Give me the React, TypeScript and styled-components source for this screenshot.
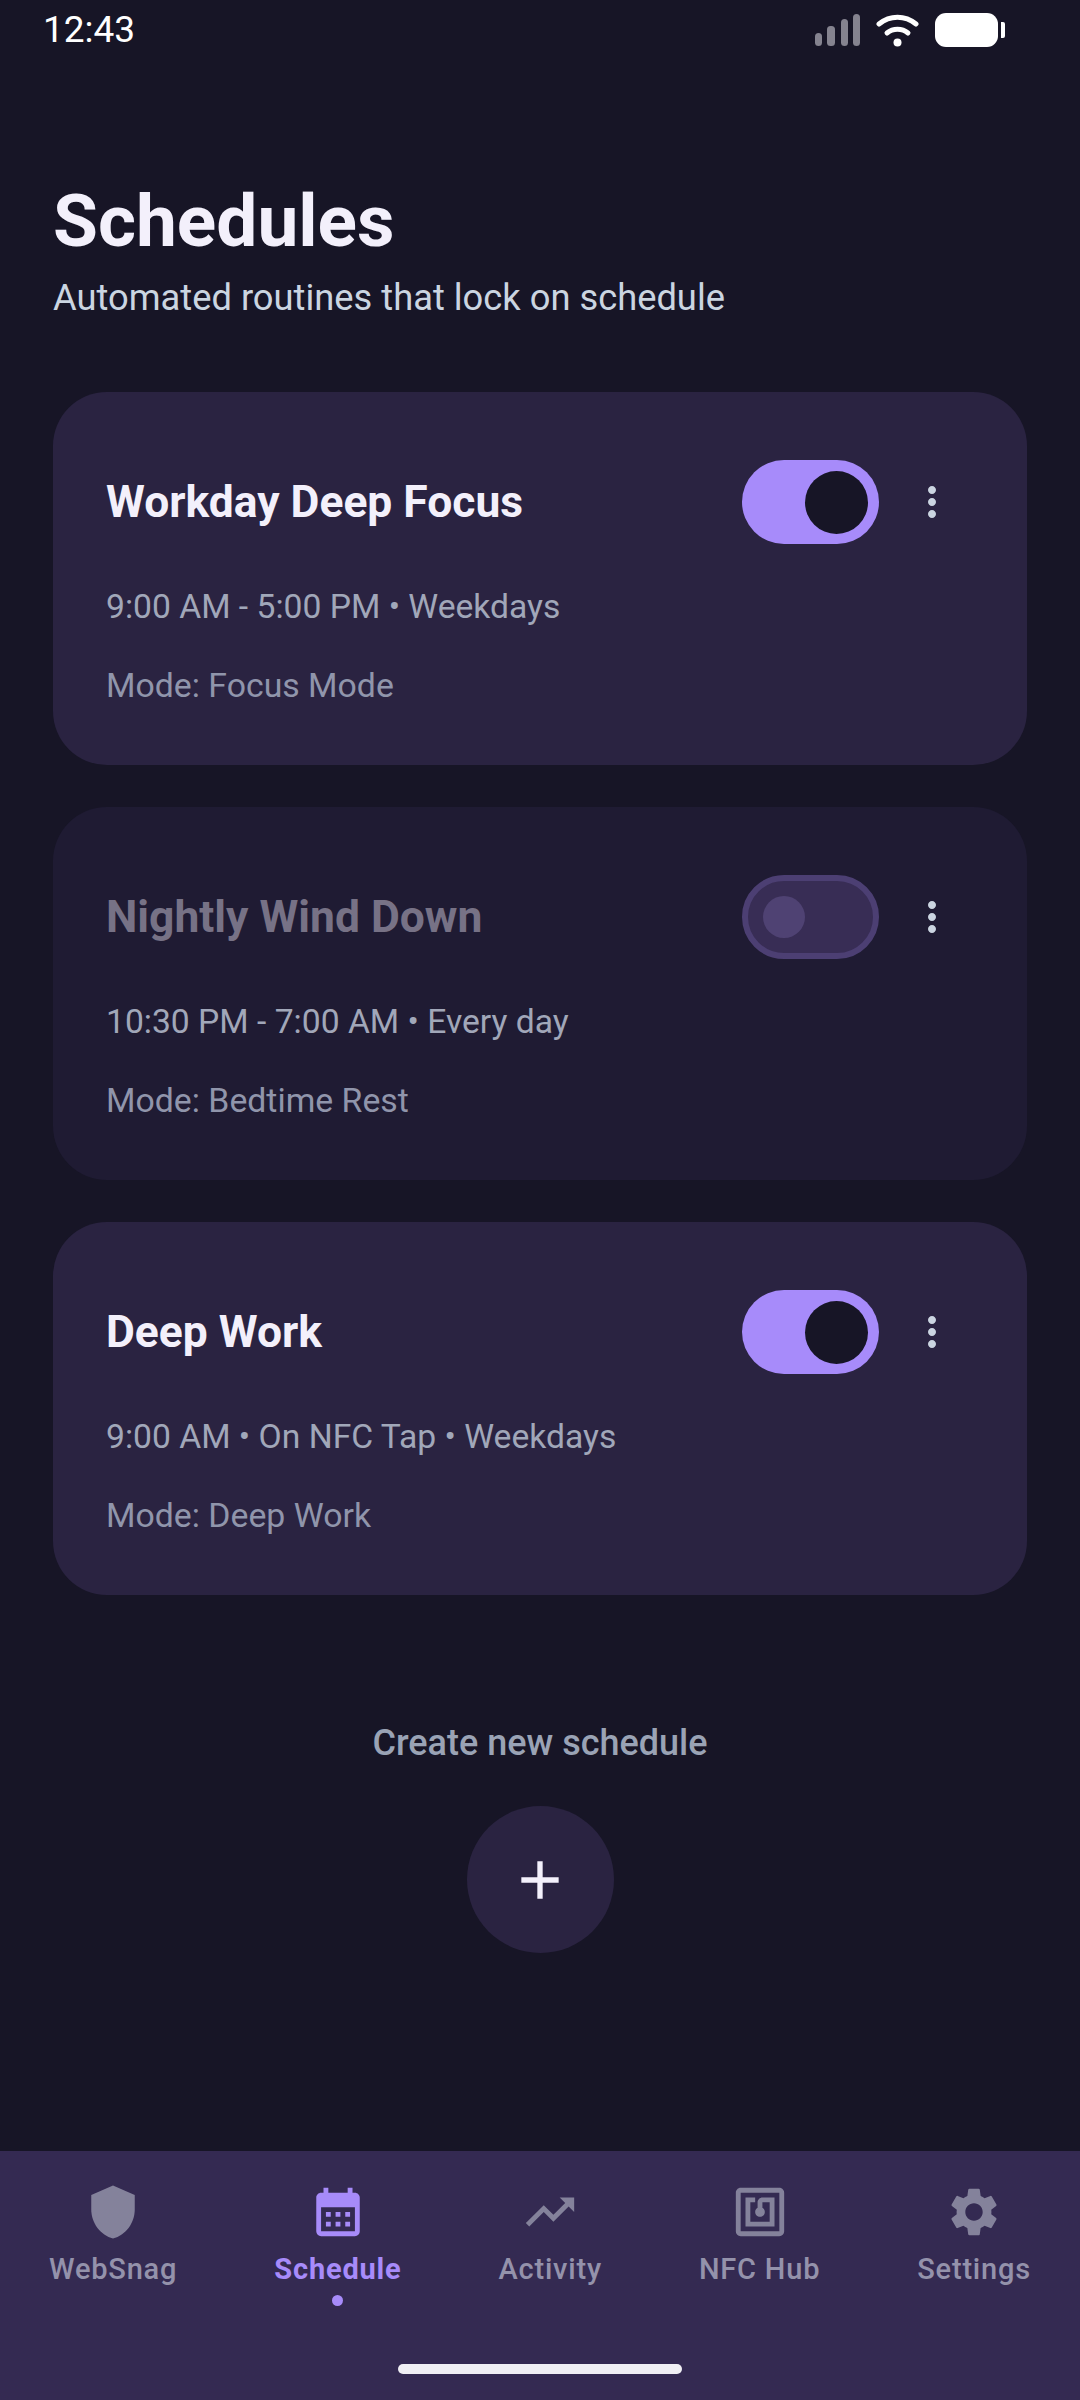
import styled, { createGlobalStyle } from 'styled-components';
import {
  MdAdd,
  MdCalendarMonth,
  MdMoreVert,
  MdNfc,
  MdSettings,
  MdShield,
  MdTrendingUp,
} from 'react-icons/md';

const GlobalStyle = createGlobalStyle`
  html, body {
    margin: 0;
    padding: 0;
    background: #171526;
  }
  * {
    box-sizing: border-box;
  }
`;

const Screen = styled.div`
  width: 1080px;
  height: 2400px;
  display: flex;
  flex-direction: column;
  background: #171526;
  font-family: Roboto, 'Liberation Sans', sans-serif;
  overflow: hidden;
`;

const StatusBar = styled.div`
  height: 60px;
  flex: none;
  display: flex;
  align-items: center;
  justify-content: space-between;
  padding: 0 75px 0 43px;
`;

const Clock = styled.span`
  font-size: 37px;
  line-height: 60px;
  color: #ffffff;
`;

const Main = styled.main`
  flex: 1;
  padding: 119px 53px 0;
  display: flex;
  flex-direction: column;
`;

const Title = styled.h1`
  margin: 0;
  font-size: 73px;
  line-height: 84px;
  font-weight: 700;
  color: #f3f0fb;
`;

const Subtitle = styled.p`
  margin: 14px 0 0;
  font-size: 36.3px;
  line-height: 42px;
  color: #cbd5e1;
`;

const CardList = styled.div`
  margin-top: 73px;
  display: flex;
  flex-direction: column;
  gap: 42px;
`;

const Card = styled.section<{ $dim?: boolean }>`
  height: 373px;
  padding: 68px 53px 0;
  border-radius: 54px;
  background: ${(p) => (p.$dim ? '#1f1b33' : '#2a2341')};
`;

const CardHead = styled.div`
  height: 84px;
  display: flex;
  align-items: center;
  justify-content: space-between;
`;

const CardTitle = styled.h2<{ $dim?: boolean }>`
  margin: 0;
  font-size: 44.4px;
  line-height: 50px;
  font-weight: 700;
  color: ${(p) => (p.$dim ? '#777286' : '#f3f0fb')};
`;

const Actions = styled.div`
  display: flex;
  align-items: center;
  gap: 29px;
  padding-right: 18px;
  color: #cbd5e1;
`;

const Toggle = styled.div<{ $on?: boolean }>`
  width: 137px;
  height: 84px;
  border-radius: 42px;
  display: flex;
  align-items: center;
  justify-content: ${(p) => (p.$on ? 'flex-end' : 'flex-start')};
  padding: ${(p) => (p.$on ? '0 11px' : '0 15px')};
  background: ${(p) => (p.$on ? '#a78bfa' : '#382d55')};
  border: ${(p) => (p.$on ? 'none' : '6px solid #4c3f73')};
`;

const Thumb = styled.div<{ $on?: boolean }>`
  width: ${(p) => (p.$on ? 63 : 42)}px;
  height: ${(p) => (p.$on ? 63 : 42)}px;
  border-radius: 50%;
  background: ${(p) => (p.$on ? '#171526' : '#4f4273')};
`;

const TimeLine = styled.p`
  margin: 43px 0 0;
  font-size: 33.65px;
  line-height: 40px;
  color: #a1a7b9;
`;

const ModeLine = styled.p`
  margin: 39px 0 0;
  font-size: 33.8px;
  line-height: 40px;
  color: #9095ab;
`;

const Create = styled.div`
  margin-top: 127px;
  display: flex;
  flex-direction: column;
  align-items: center;
  gap: 42px;
`;

const CreateLabel = styled.span`
  font-size: 36px;
  line-height: 42px;
  font-weight: 500;
  color: #9aa3b5;
`;

const Fab = styled.button`
  width: 147px;
  height: 147px;
  padding: 0;
  border: none;
  border-radius: 50%;
  display: flex;
  align-items: center;
  justify-content: center;
  background: #2a2341;
  color: #f3f0fb;
`;

const NavBar = styled.nav`
  position: relative;
  flex: none;
  height: 249px;
  padding: 32px 49px 0;
  display: flex;
  justify-content: space-between;
  align-items: flex-start;
  background: #342a52;
`;

const NavItem = styled.div<{ $active?: boolean }>`
  display: flex;
  flex-direction: column;
  align-items: center;
  color: ${(p) => (p.$active ? '#a78bfa' : '#84829b')};
`;

const NavLabel = styled.span<{ $active?: boolean }>`
  margin-top: 10px;
  font-size: 29px;
  line-height: 36px;
  letter-spacing: 0.8px;
  font-weight: ${(p) => (p.$active ? 700 : 500)};
  color: ${(p) => (p.$active ? '#a78bfa' : '#9492ab')};
`;

const ActiveDot = styled.span`
  width: 11px;
  height: 11px;
  margin-top: 8px;
  border-radius: 50%;
  background: #a78bfa;
`;

const HomeBar = styled.div`
  position: absolute;
  left: 398px;
  bottom: 26px;
  width: 284px;
  height: 10px;
  border-radius: 5px;
  background: #f0eff4;
`;

const StatusIcons = styled.div`
  display: flex;
  align-items: center;
  gap: 16px;
`;

const SignalIcon = () => (
  <svg width="45" height="32" viewBox="0 0 45 32" fill="#85838f">
    <rect x="0" y="19" width="7" height="13" rx="3.5" />
    <rect x="12" y="12" width="8" height="20" rx="3.5" />
    <rect x="26" y="5" width="7" height="27" rx="3.5" />
    <rect x="38" y="0" width="7" height="32" rx="3.5" />
  </svg>
);

const WifiIcon = () => (
  <svg width="43" height="33" viewBox="0 0 43 33" fill="none" stroke="#fff" strokeWidth="5" strokeLinecap="round">
    <path d="M3 10C14 1 29 1 40 10" />
    <path d="M11 19C17 14 26 14 32 19" />
    <circle cx="21.5" cy="28.5" r="4" fill="#fff" stroke="none" />
  </svg>
);

const BatteryIcon = () => (
  <svg width="70" height="34" viewBox="0 0 70 34" fill="#fff">
    <rect x="0" y="0" width="63" height="34" rx="11" />
    <path d="M66 9h2a2 2 0 0 1 2 2v12a2 2 0 0 1-2 2h-2z" />
  </svg>
);

const schedules = [
  { name: 'Workday Deep Focus', time: '9:00 AM - 5:00 PM • Weekdays', mode: 'Mode: Focus Mode', on: true },
  { name: 'Nightly Wind Down', time: '10:30 PM - 7:00 AM • Every day', mode: 'Mode: Bedtime Rest', on: false },
  { name: 'Deep Work', time: '9:00 AM • On NFC Tap • Weekdays', mode: 'Mode: Deep Work', on: true },
];

const tabs = [
  { label: 'WebSnag', Icon: MdShield },
  { label: 'Schedule', Icon: MdCalendarMonth, active: true },
  { label: 'Activity', Icon: MdTrendingUp },
  { label: 'NFC Hub', Icon: MdNfc },
  { label: 'Settings', Icon: MdSettings },
];

const App = () => {
  return (
    <Screen>
      <GlobalStyle />
      <StatusBar>
        <Clock>12:43</Clock>
        <StatusIcons>
          <SignalIcon />
          <WifiIcon />
          <BatteryIcon />
        </StatusIcons>
      </StatusBar>
      <Main>
        <Title>Schedules</Title>
        <Subtitle>Automated routines that lock on schedule</Subtitle>
        <CardList>
          {schedules.map((s) => (
            <Card key={s.name} $dim={!s.on}>
              <CardHead>
                <CardTitle $dim={!s.on}>{s.name}</CardTitle>
                <Actions>
                  <Toggle $on={s.on}>
                    <Thumb $on={s.on} />
                  </Toggle>
                  <MdMoreVert size={48} />
                </Actions>
              </CardHead>
              <TimeLine>{s.time}</TimeLine>
              <ModeLine>{s.mode}</ModeLine>
            </Card>
          ))}
        </CardList>
        <Create>
          <CreateLabel>Create new schedule</CreateLabel>
          <Fab>
            <MdAdd size={64} />
          </Fab>
        </Create>
      </Main>
      <NavBar>
        {tabs.map(({ label, Icon, active }) => (
          <NavItem key={label} $active={active}>
            <Icon size={58} />
            <NavLabel $active={active}>{label}</NavLabel>
            {active && <ActiveDot />}
          </NavItem>
        ))}
        <HomeBar />
      </NavBar>
    </Screen>
  );
};

export default App;
